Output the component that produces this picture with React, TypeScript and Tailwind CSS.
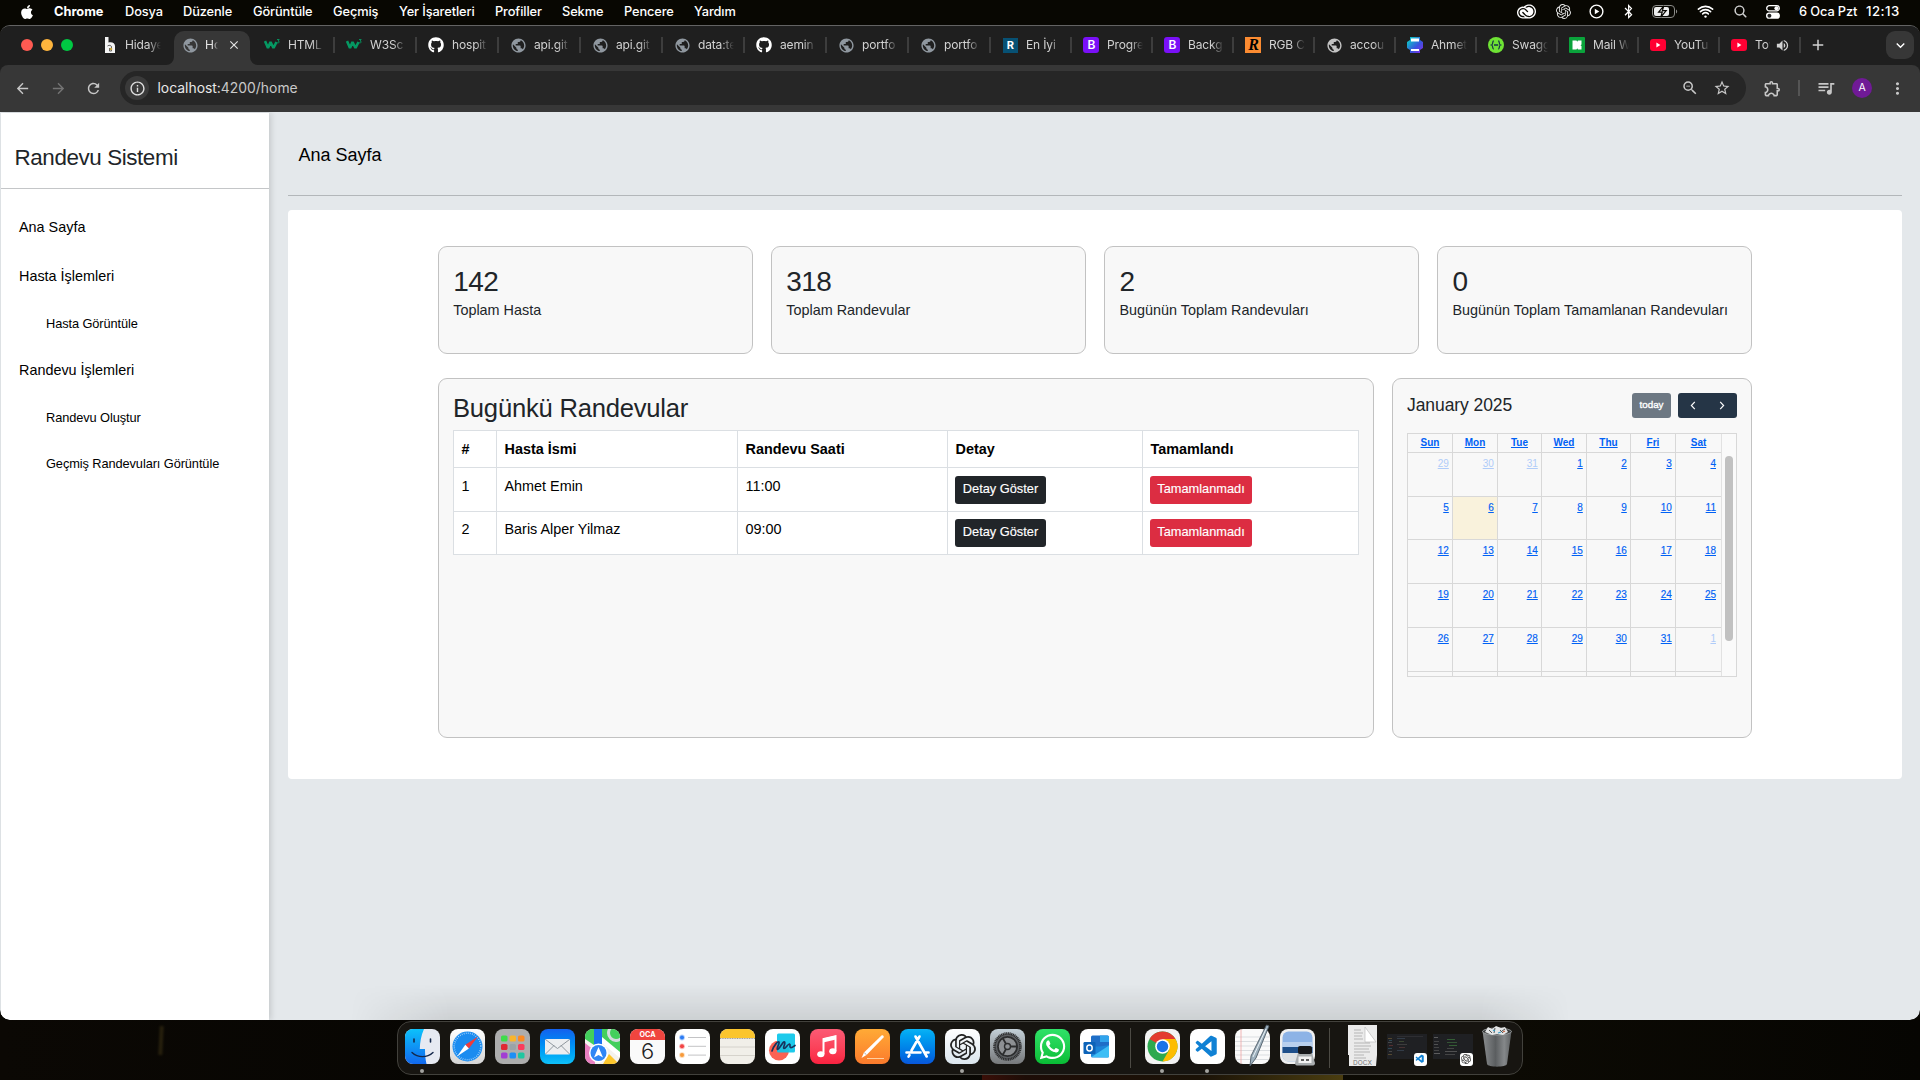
import React from "react";
import {
  MdPublic, MdArrowBack, MdArrowForward, MdRefresh, MdInfoOutline, MdZoomOut, MdStarBorder,
  MdOutlineExtension, MdQueueMusic, MdMoreVert, MdVolumeUp, MdExpandMore, MdAdd, MdClose,
} from "react-icons/md";
import { FaApple, FaGithub, FaBluetoothB, FaWhatsapp } from "react-icons/fa";
import { IoSearch, IoWifi } from "react-icons/io5";
import { SiOpenai, SiAdobecreativecloud } from "react-icons/si";
import { VscVscode } from "react-icons/vsc";

/* ---------- menu bar ---------- */

const menus = [
  { t: "Dosya", w: "w-[58px]" },
  { t: "Düzenle", w: "w-[70px]" },
  { t: "Görüntüle", w: "w-[80px]" },
  { t: "Geçmiş", w: "w-[66px]" },
  { t: "Yer İşaretleri", w: "w-[96px]" },
  { t: "Profiller", w: "w-[67px]" },
  { t: "Sekme", w: "w-[62px]" },
  { t: "Pencere", w: "w-[70px]" },
  { t: "Yardım", w: "w-[60px]" },
];

function Slot({ w, children }: { w: string; children: React.ReactNode }) {
  return <div className={"flex shrink-0 items-center justify-center " + w}>{children}</div>;
}

function MenuBar() {
  return (
    <div className="flex h-[25px] items-center bg-[#080702] pb-[2px] text-[12.8px] font-medium text-white">
      <div className="flex w-[54px] shrink-0 pl-[19px]">
        <FaApple className="h-[16px] w-[16px]" />
      </div>
      <div className="w-[71px] shrink-0 font-bold">Chrome</div>
      {menus.map((m) => (
        <div key={m.t} className={"shrink-0 whitespace-nowrap tracking-[-0.1px] " + m.w}>{m.t}</div>
      ))}
      <div className="flex-1" />
      {/* each slot is centred on its icon */}
      <Slot w="w-[36px]"><SiAdobecreativecloud className="h-[19px] w-[19px]" /></Slot>
      <Slot w="w-[38px]"><SiOpenai className="h-[15px] w-[15px] text-[#e5e5e5]" /></Slot>
      <Slot w="w-[28px]">
        <svg viewBox="0 0 16 16" className="h-[15px] w-[15px]">
          <circle cx="8" cy="8" r="6.8" fill="none" stroke="white" strokeWidth="1.5" />
          <path d="M6.2 5v6l4.8-3z" fill="white" />
        </svg>
      </Slot>
      <Slot w="w-[36px]"><FaBluetoothB className="h-[15px] w-[13px]" /></Slot>
      <Slot w="w-[38px]">
        <svg viewBox="0 0 26 13" className="h-[13px] w-[26px]">
          <rect x="0.5" y="0.5" width="22" height="12" rx="3.5" fill="none" stroke="#8b8b88" />
          <rect x="2" y="2" width="15" height="9" rx="2" fill="#eee" />
          <path d="M11.8.8 6.6 7.2h3.6l-1.4 5 5.4-6.6h-3.8z" fill="#eee" stroke="#080702" strokeWidth="1.2" />
          <path d="M24 4.5v4c1.6-.6 1.6-3.4 0-4z" fill="#8b8b88" />
        </svg>
      </Slot>
      <Slot w="w-[42px]"><IoWifi className="h-[19px] w-[19px]" /></Slot>
      <Slot w="w-[28px]"><IoSearch className="h-[15px] w-[15px] text-[#cfcfcf]" /></Slot>
      <Slot w="w-[38px]">
        <svg viewBox="0 0 14 14" className="h-[14px] w-[14px]">
          <rect x="0.7" y="0.7" width="12.6" height="5.2" rx="2.6" fill="none" stroke="white" strokeWidth="1.3" />
          <circle cx="10.4" cy="3.3" r="2" fill="white" />
          <rect x="0" y="7.6" width="14" height="6.2" rx="3.1" fill="white" />
          <circle cx="3.4" cy="10.7" r="2" fill="#222" />
        </svg>
      </Slot>
      <div className="ml-[7px] w-[67px] shrink-0 whitespace-nowrap tracking-[-0.1px]">6 Oca Pzt</div>
      <div className="w-[54px] shrink-0 text-[13.2px] tracking-[0.5px]">12:13</div>
    </div>
  );
}

/* ---------- browser tabs ---------- */

const Globe = ({ c = "text-[#8f979f]" }: { c?: string }) => <MdPublic className={"h-[17px] w-[17px] " + c} />;
const Hub = () => <FaGithub className="h-4 w-4 text-white" />;
const W3 = () => (
  <svg viewBox="0 0 16 16" className="h-4 w-4">
    <path d="M1 4 4 11l2.500-6L9.500 11l3-6" fill="none" stroke="#059862" strokeWidth="2.600" strokeLinejoin="bevel" />
    <path d="M13 2.500h2.200L14 4c1.700 0 1.700 2.300-.8 1.900" fill="none" stroke="#059862" strokeWidth=".9" />
  </svg>
);
const Boot = () => (
  <div className="flex h-4 w-4 items-center justify-center rounded-[3px] bg-[#7a10f7] text-[12px] font-semibold text-white">B</div>
);
const Tube = () => (
  <svg viewBox="0 0 16 12" className="h-[12px] w-4">
    <rect width="16" height="12" rx="3" fill="#ff0033" />
    <path d="M6.4 3.6v4.8L10.4 6z" fill="white" />
  </svg>
);

const tabs: { t: string; icon: React.ReactNode }[] = [
  { t: "HTML", icon: <W3 /> },
  { t: "W3Sc", icon: <W3 /> },
  { t: "hospit", icon: <Hub /> },
  { t: "api.git", icon: <Globe /> },
  { t: "api.git", icon: <Globe /> },
  { t: "data:te", icon: <Globe /> },
  { t: "aemin", icon: <Hub /> },
  { t: "portfo", icon: <Globe /> },
  { t: "portfo", icon: <Globe /> },
  { t: "En İyi", icon: <div className="flex h-[15px] w-[15px] items-center justify-center bg-[#075174] text-[11px] font-bold text-white">R</div> },
  { t: "Progre", icon: <Boot /> },
  { t: "Backg", icon: <Boot /> },
  { t: "RGB C", icon: <div className="flex h-4 w-4 items-center justify-center bg-[#fb8b31] font-['Liberation_Serif',serif] text-[16px] font-bold italic text-black">R</div> },
  { t: "accou", icon: <Globe c="text-[#c3c3c3]" /> },
  { t: "Ahmet", icon: (
    <svg viewBox="0 0 16 16" className="h-4 w-4">
      <defs><linearGradient id="ae" x1="0" y1="0" x2="1" y2="1"><stop offset="0.2" stopColor="#12b5c9" /><stop offset="0.6" stopColor="#3b52e0" /><stop offset="1" stopColor="#8b2be8" /></linearGradient></defs>
      <path d="M3 0h10v3l3 2v6l-3 2v3H3v-3l-3-2V5l3-2z" fill="url(#ae)" />
      <path d="M4 1.5h8v3H4zM4 12h8v2H4z" fill="white" />
    </svg>
  ) },
  { t: "Swagg", icon: (
    <svg viewBox="0 0 16 16" className="h-4 w-4">
      <circle cx="8" cy="8" r="8" fill="#6fe334" />
      <path d="M5.8 4C4 4 5.4 7.4 3.6 8c1.8.6.4 4 2.2 4M10.2 4c1.8 0 .4 3.400 2.200 4-1.800.6-.4 4-2.200 4M6 8h4.200" fill="none" stroke="#173647" strokeWidth="1.300" />
    </svg>
  ) },
  { t: "Mail W", icon: (
    <svg viewBox="0 0 16 16" className="h-4 w-4">
      <rect width="16" height="16" rx="1" fill="#0aa33b" />
      <path d="M3.500 3.500h4l.7 1.200.8-1.200h3.500v4l-1 .7 1 .8v3.500H9l-.8-1.200-.7 1.200h-4z" fill="white" />
    </svg>
  ) },
  { t: "YouTu", icon: <Tube /> },
];

const fade = "[mask-image:linear-gradient(to_right,black_65%,transparent)]";

function TabCell({ icon, t, sep = true, w = "w-[81px]" }: { icon: React.ReactNode; t: string; sep?: boolean; w?: string }) {
  return (
    <div className={"flex h-4 shrink-0 items-center pl-[10.500px] " + w}>
      <div className="flex w-[17px] shrink-0 items-center justify-center">{icon}</div>
      <div className={"ml-[7px] w-[36px] overflow-hidden whitespace-nowrap tracking-[-0.15px] " + fade}>{t}</div>
      <div className="flex-1" />
      {sep && <div className="h-4 w-[2px] bg-[#3d3d3d]" />}
    </div>
  );
}

function TabStrip() {
  return (
    <div className="flex h-[39px] items-center bg-[#1f1f1f] pb-px text-[12px] text-[#d2d2d2]">
      <div className="flex w-[90.6px] shrink-0 gap-2 pl-[21px]">
        <div className="h-3 w-3 rounded-full bg-[#ff5a52]" />
        <div className="h-3 w-3 rounded-full bg-[#ffb53d]" />
        <div className="h-3 w-3 rounded-full bg-[#00c943]" />
      </div>
      <TabCell
        sep={false}
        t="Hidaye"
        icon={
          <svg viewBox="0 0 12 16" className="h-4 w-3">
            <path d="M1 0h3.500v5.500C8 4.500 11 6 11 9v7H1z" fill="#f4f4f4" />
            <path d="M3.500 9c2-1.500 4-.5 4 1v4h-2v-3" fill="none" stroke="#555" strokeWidth=".9" />
            <circle cx="7" cy="12" r="1.300" fill="#c9a640" />
          </svg>
        }
      />
      <div className="relative mr-[3px] ml-[2.400px] -mb-px flex h-[34px] w-[76.500px] shrink-0 items-center self-end rounded-t-[10px] bg-[#373737] pb-[6px] pl-[8px] text-[#e3e3e3]">
        <svg viewBox="0 0 8 8" className="absolute bottom-0 left-[-8px] h-2 w-2"><path d="M8 0v8H0a8 8 0 0 0 8-8" fill="#373737" /></svg>
        <svg viewBox="0 0 8 8" className="absolute right-[-8px] bottom-0 h-2 w-2"><path d="M0 0v8h8a8 8 0 0 1-8-8" fill="#373737" /></svg>
        <Globe />
        <div className={"ml-[6px] w-[13px] overflow-hidden whitespace-nowrap " + fade}>Ho</div>
        <MdClose className="ml-[9px] h-[14px] w-[14px]" />
      </div>
      {tabs.map((x, i) => <TabCell key={i} icon={x.icon} t={x.t} w={i < 9 ? "w-[82px]" : "w-[81px]"} />)}
      <div className="flex h-4 w-[81px] shrink-0 items-center pl-[10.500px]">
        <div className="flex w-[17px] items-center justify-center"><Tube /></div>
        <div className="ml-[7px] w-[15px] overflow-hidden whitespace-nowrap [mask-image:linear-gradient(to_right,black_80%,transparent)]">Toy</div>
        <MdVolumeUp className="ml-[5px] h-[15px] w-[15px]" />
        <div className="flex-1" />
        <div className="h-4 w-[2px] bg-[#3d3d3d]" />
      </div>
      <MdAdd className="ml-[8px] h-[18px] w-[18px] shrink-0" />
      <div className="flex-1" />
      <div className="mr-[6px] flex h-7 w-7 items-center justify-center rounded-[9px] bg-[#373737] text-white">
        <MdExpandMore className="h-[17px] w-[17px]" />
      </div>
    </div>
  );
}

function Toolbar() {
  return (
    <div className="bg-[#1f1f1f]">
      <div className="flex h-[47px] items-center rounded-t-[8px] bg-[#373737] pb-px text-[#c7c7c7]">
        <Slot w="w-[44px]"><MdArrowBack className="h-[17px] w-[17px]" /></Slot>
        <Slot w="w-[28px]"><MdArrowForward className="h-[17px] w-[17px] text-[#747474]" /></Slot>
        <Slot w="w-[43px]"><MdRefresh className="h-[17px] w-[17px]" /></Slot>
        <div className="ml-[5px] flex h-[34px] w-[1626px] shrink-0 items-center rounded-full bg-[#262626]">
          <div className="ml-[5px] flex h-6 w-6 items-center justify-center rounded-full bg-[#3a3a3a]">
            <MdInfoOutline className="h-[17px] w-[17px] text-[#dedede]" />
          </div>
          <div className="ml-[8.500px] text-[13.900px] text-[#c9c9c9]">
            <span className="text-[#e8e8e8]">localhost:</span>4200/home
          </div>
          <div className="flex-1" />
          <MdZoomOut className="h-[18px] w-[18px]" />
          <MdStarBorder className="mr-[15px] ml-[14px] h-[18px] w-[18px]" />
        </div>
        <MdOutlineExtension className="ml-[17px] h-[19px] w-[19px]" />
        <div className="ml-[16px] h-4 w-[2px] bg-[#555]" />
        <MdQueueMusic className="ml-[16px] h-[20px] w-[20px]" />
        <div className="ml-[16px] flex h-5 w-5 items-center justify-center rounded-full bg-[#701a96] text-[10.500px] text-white">A</div>
        <MdMoreVert className="ml-[16px] h-[19px] w-[19px]" />
      </div>
    </div>
  );
}

/* ---------- web page ---------- */

const nav = [
  { t: "Ana Sayfa", c: "h-[49px] pl-[18px] text-[14.4px]" },
  { t: "Hasta İşlemleri", c: "h-[49px] pl-[18px] text-[14.4px]" },
  { t: "Hasta Görüntüle", c: "h-[46px] pl-[45px] text-[12.8px] tracking-[-0.090px]" },
  { t: "Randevu İşlemleri", c: "h-[47px] pl-[18px] text-[14.4px]" },
  { t: "Randevu Oluştur", c: "h-[47px] pl-[45px] text-[12.8px] tracking-[-0.090px]" },
  { t: "Geçmiş Randevuları Görüntüle", c: "h-[46px] pl-[45px] text-[12.8px] tracking-[-0.090px]" },
];

function Sidebar() {
  return (
    <aside className="z-10 mt-px ml-px w-[268px] shrink-0 bg-white shadow-[2px_0_6px_rgba(0,0,0,0.14)]">
      <h3 className="h-[76px] border-b border-[#c4c6c8] pt-[30px] pl-[13.500px] text-[22.400px] leading-[30px] tracking-[-0.400px] text-[#212529]">
        Randevu Sistemi
      </h3>
      <nav className="flex flex-col pt-[14px] text-black">
        {nav.map((n) => (
          <a key={n.t} className={"flex items-center whitespace-nowrap " + n.c}>{n.t}</a>
        ))}
      </nav>
    </aside>
  );
}

const stats = [
  ["142", "Toplam Hasta"],
  ["318", "Toplam Randevular"],
  ["2", "Bugünün Toplam Randevuları"],
  ["0", "Bugünün Toplam Tamamlanan Randevuları"],
];

const appts = [
  ["1", "Ahmet Emin", "11:00"],
  ["2", "Baris Alper Yilmaz", "09:00"],
];

const card = "rounded-[9px] border border-[#c2c2c2] bg-[#f8f8f8]";
const cols = "grid grid-cols-[43px_241px_210px_195px_216px]";
const cell = "border-r border-b border-[#dbdfe3] ";
const btn = "block h-7 rounded-[3px] pb-[3px] text-[12.8px] leading-[24px] text-white [-webkit-text-stroke:0.150px_white] ";

function Appointments() {
  return (
    <section className={card + " w-[936px] shrink-0 pl-[14px]"}>
      <h2 className="pt-[13px] text-[25.6px] leading-[32px] tracking-[-0.220px] text-[#212529]">Bugünkü Randevular</h2>
      <div className="mt-[6px] w-[906px] border-t border-l border-[#dbdfe3] bg-white text-[14.4px] text-black">
        <div className={cols + " font-bold"}>
          {["#", "Hasta İsmi", "Randevu Saati", "Detay", "Tamamlandı"].map((h) => (
            <div key={h} className={cell + "h-[37px] pl-[7.500px] leading-[36px]"}>{h}</div>
          ))}
        </div>
        {appts.map((r, i) => (
          <div key={r[0]} className={cols + (i === 0 ? " h-[44px]" : " h-[43px]")}>
            {r.map((c) => <div key={c} className={cell + "pl-[7.500px] leading-[21px]" + (i === 0 ? " pt-[8px]" : " pt-[7px]")}>{c}</div>)}
            <div className={cell + "pl-[7px]" + (i === 0 ? " pt-[8px]" : " pt-[7px]")}>
              <button className={btn + "w-[91px] bg-[#212529]"}>Detay Göster</button>
            </div>
            <div className={cell + "pl-[7px]" + (i === 0 ? " pt-[8px]" : " pt-[7px]")}>
              <button className={btn + "w-[102px] bg-[#dc2d42]"}>Tamamlanmadı</button>
            </div>
          </div>
        ))}
      </div>
    </section>
  );
}

const weeks = [
  { h: "h-[44px]", d: [29, 30, 31, 1, 2, 3, 4] },
  { h: "h-[43px]", d: [5, 6, 7, 8, 9, 10, 11] },
  { h: "h-[44px]", d: [12, 13, 14, 15, 16, 17, 18] },
  { h: "h-[44px]", d: [19, 20, 21, 22, 23, 24, 25] },
  { h: "h-[44px]", d: [26, 27, 28, 29, 30, 31, 1] },
];
const calCols = "grid grid-cols-[45px_45px_44px_45px_44px_45px_45px]";

function Calendar() {
  return (
    <section className={card + " w-[360px] shrink-0 pl-[14px] text-[#0061f5]"}>
      <div className="flex h-[54px] pt-[14px] pr-[14px] text-[#212529]">
        <h2 className="flex-1 text-[17.5px] leading-[24px] tracking-[-0.080px]">January 2025</h2>
        <button className="h-[25px] w-[39px] rounded-[3px] bg-[#6d7883] pb-[2px] text-[9.8px] leading-[23px] text-white [-webkit-text-stroke:0.350px_white]">today</button>
        <div className="ml-[7px] flex h-[25px] w-[59px] items-center justify-between rounded-[3px] bg-[#253546] px-[12px]">
          {["M5 1 1.200 5 5 9", "M1 1l3.800 4L1 9"].map((d) => (
            <svg key={d} viewBox="0 0 6 10" className="h-[9px] w-[6px]"><path d={d} fill="none" stroke="white" strokeWidth="1.300" /></svg>
          ))}
        </div>
      </div>
      <div className="flex h-[244px] w-[330px] overflow-hidden border border-[#d8d8d8] text-[10px] leading-[11px]">
        <div className="w-[313px] shrink-0">
          <div className={calCols}>
            {["Sun", "Mon", "Tue", "Wed", "Thu", "Fri", "Sat"].map((d) => (
              <div key={d} className="h-[19px] border-r border-b border-[#d8d8d8] pt-[3px] text-center font-bold underline underline-offset-1 last:border-r-0">{d}</div>
            ))}
          </div>
          {weeks.map((w, i) => (
            <div key={i} className={calCols + " " + w.h}>
              {w.d.map((d, j) => {
                const dim = (i === 0 && d > 20) || (i === 4 && d === 1);
                return (
                  <div
                    key={j}
                    className={
                      "border-r border-b border-[#d8d8d8] pt-[5px] pr-[3.200px] text-right underline underline-offset-1 last:border-r-0 last:pr-[5px]" +
                      (dim ? " text-[#b0ccf9]" : " [-webkit-text-stroke:0.150px_#0061f5]") +
                      (d === 6 ? " bg-[#f9f2dc]" : "")
                    }
                  >
                    {d}
                  </div>
                );
              })}
            </div>
          ))}
          <div className={calCols + " h-[5px]"}>
            {[0, 1, 2, 3, 4, 5, 6].map((k) => <div key={k} className="border-r border-[#d8d8d8] last:border-r-0" />)}
          </div>
        </div>
        <div className="w-[15px] border-l border-[#e2e2e2] bg-[#fafafa] pt-[22px] pl-[3px]">
          <div className="h-[185px] w-2 rounded-full bg-[#c1c1c1]" />
        </div>
      </div>
    </section>
  );
}

function Page() {
  return (
    <div className="flex h-[908px] overflow-hidden rounded-b-[10px] bg-[#e4e8eb] font-['Liberation_Sans',Arial,sans-serif]">
      <Sidebar />
      <main className="flex-1 pr-[18px] pl-[19px]">
        <header className="h-[84px] border-b border-[#b3b7ba] pt-[29px] pl-[10.500px] text-[18px] leading-[28px] text-black">Ana Sayfa</header>
        <div className="mt-[14px] h-[569px] rounded-[4px] bg-white pt-[36px]">
          <div className="mx-auto flex w-[1314px] flex-col gap-[24px]">
            <div className="grid grid-cols-4 gap-[18.4px]">
              {stats.map(([n, l]) => (
                <div key={l} className={card + " h-[108px] pt-[17px] pl-[14.200px] text-[#212529]"}>
                  <div className="text-[28px] leading-[36px] tracking-[-0.600px]">{n}</div>
                  <div className="text-[14.4px] leading-[20px] whitespace-nowrap">{l}</div>
                </div>
              ))}
            </div>
            <div className="flex h-[360px] gap-[18px]">
              <Appointments />
              <Calendar />
            </div>
          </div>
        </div>
      </main>
    </div>
  );
}

/* ---------- dock ---------- */

function DockIcon({ bg, dot, children }: { bg: string; dot?: boolean; children?: React.ReactNode }) {
  return (
    <div className="relative h-[35px] w-[35px] shrink-0">
      <div className={"flex h-[35px] w-[35px] items-center justify-center overflow-hidden rounded-[8px] " + bg}>{children}</div>
      {dot && <div className="absolute top-[40px] left-[15px] h-1 w-1 rounded-full bg-[#a3a3a0]" />}
    </div>
  );
}

const Art = ({ children }: { children: React.ReactNode }) => (
  <svg viewBox="0 0 35 35" className="h-[35px] w-[35px]">{children}</svg>
);

const pads = ["#3fdc4a", "#f9b52c", "#fb8a24", "#e02833", "#9aa3a8", "#fb3b5c", "#a23fd3", "#1f8ff5", "#1fc7a0"];

function Thumb({ children, code }: { children: React.ReactNode; code: [number, number, number, string][] }) {
  return (
    <div className="relative flex h-[35px] w-[40px] shrink-0 items-start pt-[4px]">
      <svg viewBox="0 0 40 26" className="h-[26px] w-[40px]">
        <rect width="40" height="25" y="1" fill="#1f2023" />
        {code.map(([x, y, w, c], i) => <rect key={i} x={x} y={y} width={w} height="0.7" fill={c} />)}
      </svg>
      <div className="absolute top-[23.500px] left-[27px] flex h-[13px] w-[13px] items-center justify-center rounded-[3px] bg-white">{children}</div>
    </div>
  );
}

const codeA: [number, number, number, string][] = [
  [1, 5, 4, "#6b5a35"], [2, 7, 3, "#355a6b"], [1, 9, 4, "#5a5a5a"], [2, 12, 4, "#6b3535"], [1, 15, 4, "#355a6b"], [2, 18, 3, "#5a5a5a"], [1, 21, 4, "#6b5a35"],
  [10, 5, 8, "#3c4a5a"], [12, 8, 5, "#4a5a3c"], [10, 11, 10, "#4a4a4a"], [12, 14, 6, "#5a3c3c"], [10, 17, 7, "#3c4a5a"], [10, 3, 26, "#35363a"],
];
const codeB: [number, number, number, string][] = [
  [1, 4, 4, "#777"], [1, 8, 5, "#555"], [1, 11, 4, "#666"], [1, 14, 5, "#555"], [1, 17, 5, "#555"], [1, 20, 6, "#777"],
  [14, 6, 8, "#3e7a3e"], [14, 9, 10, "#3e6a3e"], [16, 12, 8, "#3e7a3e"], [14, 15, 7, "#555"], [12, 18, 12, "#666"], [12, 21, 10, "#555"],
];

function Dock() {
  return (
    <div className="relative mx-auto mt-[1px] flex h-[54px] w-[1126px] gap-[10px] rounded-[14px] border border-[#42413c] bg-[#171511] pt-[7px] pl-[7px]">
      <DockIcon bg="bg-[#e6eaf2]" dot>
        <Art>
          <defs><linearGradient id="fi" x1="0" y1="0" x2="0" y2="1"><stop stopColor="#0cc1fb" /><stop offset="1" stopColor="#1168ee" /></linearGradient></defs>
          <path d="M0 0h19c-3 7-4 13-4.200 20H20c0 6 .5 11 1.500 15H0z" fill="url(#fi)" />
          <path d="M9 10v3M25.500 10v3" stroke="#14284b" strokeWidth="1.600" strokeLinecap="round" />
          <path d="M7 23.500c6 5.500 15 5.500 21 0" fill="none" stroke="#14284b" strokeWidth="1.400" strokeLinecap="round" />
        </Art>
      </DockIcon>
      <DockIcon bg="bg-linear-to-b from-white to-[#d5d5d5]">
        <Art>
          <circle cx="17.500" cy="17.500" r="15" fill="#1b8cf0" />
          <circle cx="17.500" cy="17.500" r="13.300" fill="none" stroke="#d5ebff" strokeWidth="1.600" strokeDasharray=".6 1.490" />
          <path d="m28 7.500-12.700 8.300 3.600 3.600z" fill="#f23a3a" />
          <path d="m7 27.500 8.300-11.700 3.600 3.600z" fill="#fff" />
        </Art>
      </DockIcon>
      <DockIcon bg="bg-[#adadad]">
        <Art>{pads.map((c, i) => <rect key={c} x={6 + (i % 3) * 8.5} y={6.5 + Math.floor(i / 3) * 8.5} width="6.500" height="6" rx="1.600" fill={c} />)}</Art>
      </DockIcon>
      <DockIcon bg="bg-linear-to-b from-[#1460ee] to-[#10c0f8]">
        <Art>
          <rect x="5" y="10" width="25" height="15.500" rx="1.500" fill="#eceef0" />
          <path d="m5.500 10.500 12 9 12-9M5.500 25l8.500-8.500M29.500 25 21 16.500" fill="none" stroke="#8f979e" strokeWidth="1" />
        </Art>
      </DockIcon>
      <DockIcon bg="bg-[#f4f2ee]">
        <Art>
          <path d="M16 0h19v24L16 9z" fill="#43cf5c" />
          <path d="M0 0h9v16L0 10z" fill="#43cf5c" />
          <path d="M9 0h8v18H9z" fill="#1a70f0" />
          <path d="M0 14l10 8v13H0z" fill="#e97fc0" />
          <path d="M18 35l6-10 10 10z" fill="#fcc62d" />
          <path d="M17 8 35 23v6L17 14z" fill="#fff" />
          <circle cx="31" cy="4" r="7.500" fill="none" stroke="#d4dade" strokeWidth="3" />
          <circle cx="13.500" cy="24" r="9.500" fill="#fff" />
          <circle cx="13.500" cy="24" r="8" fill="#2f86f5" />
          <path d="m13.500 18 4.500 10.500-4.500-2.500L9 28.500z" fill="#fff" />
        </Art>
      </DockIcon>
      <DockIcon bg="bg-[#fafafa]">
        <div className="flex h-full w-full flex-col">
          <div className="h-[11px] bg-[#f0453f] text-center text-[7.200px] font-bold leading-[12px] text-white">OCA</div>
          <div className="text-center text-[22px] font-light leading-[23px] text-[#222]">6</div>
        </div>
      </DockIcon>
      <DockIcon bg="bg-white">
        <Art>
          {["#2b7bf3", "#f24545", "#f79a3a"].map((c, i) => (
            <g key={c}>
              <circle cx="7" cy={8.5 + i * 8.8} r="2.900" fill={c} opacity=".35" />
              <circle cx="7" cy={8.5 + i * 8.8} r="2" fill={c} />
              <path d={`M13 ${8.5 + i * 8.8}h18`} stroke="#c3c3c5" strokeWidth="1" />
            </g>
          ))}
        </Art>
      </DockIcon>
      <DockIcon bg="bg-[#f1efe9]">
        <Art>
          <rect width="35" height="9" fill="#fbc52d" />
          <path d="M0 9.500h35" stroke="#9c9a93" strokeWidth="1" strokeDasharray="1 .7" />
          <path d="M0 18h35M0 26.500h35" stroke="#cfccc4" strokeWidth=".8" />
        </Art>
      </DockIcon>
      <DockIcon bg="bg-white">
        <Art>
          <circle cx="14" cy="21.500" r="10" fill="#fb6252" />
          <rect x="12" y="4.500" width="18" height="19" rx="1.500" fill="#0cc6ea" opacity=".93" />
          <path d="M7 22c2-6 6-10 7-9s-3 7-1.500 7.500S18 12 19.500 13s-2 6-.5 6.500 4-5 5.500-4.500-.5 3 1 3.500 3-1 4.500-2" fill="none" stroke="#17325c" strokeWidth="1.700" strokeLinecap="round" />
        </Art>
      </DockIcon>
      <DockIcon bg="bg-linear-to-b from-[#fb5a74] to-[#fa2140]">
        <Art>
          <path d="M13.500 25V10l12-2.800V22" fill="none" stroke="#fff" strokeWidth="2" />
          <path d="M13 9.500l13-3v4l-13 3z" fill="#fff" />
          <ellipse cx="10.800" cy="25.300" rx="3.600" ry="3" fill="#fff" />
          <ellipse cx="22.800" cy="22.300" rx="3.600" ry="3" fill="#fff" />
        </Art>
      </DockIcon>
      <DockIcon bg="bg-linear-to-b from-[#ffaa36] to-[#fb7a2c]">
        <Art>
          <path d="M6.500 29 9 23.500 26.500 6.500c1.300-1 2.900.6 2 1.900L11.500 26z" fill="#fff" />
          <path d="m9.300 23.500 2 2.300" stroke="#999" strokeWidth=".8" />
          <path d="M12 29.500h17" stroke="#ffd9ae" strokeWidth=".9" />
        </Art>
      </DockIcon>
      <DockIcon bg="bg-linear-to-b from-[#0bb2f5] to-[#0a57dc] text-white">
        <Art>
          <path d="M19.500 7.500 11.500 21.500M15.500 7.500l11.200 20M6.500 23.500h14M25 23.500h3.500M9.500 26l-1 1.700" stroke="white" strokeWidth="2.600" strokeLinecap="round" fill="none" />
        </Art>
      </DockIcon>
      <DockIcon bg="bg-linear-to-b from-white to-[#dbe6ee] text-[#222]" dot><SiOpenai className="h-[26px] w-[26px]" /></DockIcon>
      <DockIcon bg="bg-linear-to-b from-[#c3d0d8] to-[#77797b]">
        <Art>
          <circle cx="17.500" cy="17.500" r="13" fill="#5c5f62" stroke="#2c2d2e" strokeWidth="2.600" strokeDasharray="1.100 .6" />
          <circle cx="17.500" cy="17.500" r="9.600" fill="#8d9093" stroke="#2c2d2e" strokeWidth="1.800" />
          <path d="M17.500 17.500h10M17.500 17.500l-5-8.700M17.500 17.500l-5 8.700" stroke="#2c2d2e" strokeWidth="1.800" />
          <circle cx="17.500" cy="17.500" r="3" fill="#8d9093" stroke="#2c2d2e" strokeWidth="1.400" />
        </Art>
      </DockIcon>
      <DockIcon bg="bg-linear-to-b from-[#2fe268] to-[#08bd35] text-white"><FaWhatsapp className="h-[29px] w-[29px]" /></DockIcon>
      <DockIcon bg="bg-white">
        <Art>
          <rect x="11" y="6.500" width="18" height="13" rx="1.500" fill="#1e6ec7" />
          <path d="M20 6.500h7.500a1.500 1.500 0 0 1 1.500 1.500v5h-9z" fill="#30a4ec" />
          <path d="M11 17.500h9l9-1.500v11a1.500 1.500 0 0 1-1.500 1.500h-15A1.500 1.500 0 0 1 11 27z" fill="#1c85d8" />
          <path d="m11.500 28 17.500-11.500V27a1.500 1.500 0 0 1-1.500 1.500z" fill="#3dbef5" />
          <rect x="3.500" y="13" width="12" height="12" rx="1.200" fill="#0c63b8" />
          <ellipse cx="9.500" cy="19" rx="2.700" ry="3" fill="none" stroke="#fff" strokeWidth="1.500" />
        </Art>
      </DockIcon>
      <div className="mt-[-1px] ml-[4.500px] h-10 w-px shrink-0 bg-[#4c4a44]" />
      <div className="ml-[4px] flex gap-[10px]">
        <DockIcon bg="bg-[#f3f3f3]" dot>
          <Art>
            <circle cx="17.500" cy="17.500" r="15" fill="#2da94f" />
            <path d="M17.500 17.500 4.510 10a15 15 0 0 1 25.980 0z" fill="#e33b2e" />
            <path d="M17.500 10h13a15 15 0 0 1-13 22.500l6.500-11.300z" fill="#fdbd00" />
            <circle cx="17.500" cy="17.500" r="7.300" fill="#fff" />
            <circle cx="17.500" cy="17.500" r="5.700" fill="#1a73e8" />
          </Art>
        </DockIcon>
        <DockIcon bg="bg-white text-[#1081d4]" dot><VscVscode className="h-[26px] w-[26px]" /></DockIcon>
        <div className="relative">
          <DockIcon bg="bg-[#fafafa]">
            <Art>
              <path d="M0 8h35M0 12.500h35M0 17h35M0 21.500h35M0 26h35M0 30.500h35" stroke="#cdd1d6" strokeWidth=".7" />
              <path d="M6 0v35" stroke="#efa3a3" strokeWidth=".8" />
            </Art>
          </DockIcon>
          <svg viewBox="0 0 22 46" className="absolute top-[-5px] left-[13px] h-[46px] w-[22px]">
            <path d="M18.500 1 21 2 8 34l-6 8 1-10z" fill="#9db0bd" stroke="#4e5b66" strokeWidth=".9" />
            <path d="m18 5-13 28" stroke="#e9f1f5" strokeWidth="1" />
          </svg>
        </div>
        <div className="relative">
          <DockIcon bg="bg-[#f0f0f0]">
            <Art>
              <rect x="2.500" y="2.500" width="30" height="30" rx="6" fill="#8db3e6" />
              <path d="M2.500 13h30v6h-30z" fill="#b9d0ee" />
              <rect x="2.500" y="18" width="30" height="6" fill="#1e4f8a" />
              <path d="M2.500 24h30v3a6 6 0 0 1-6 5.500h-18a6 6 0 0 1-6-5.500z" fill="#dfe2e4" />
            </Art>
          </DockIcon>
          <svg viewBox="0 0 20 22" className="absolute top-[16px] left-[15px] h-[22px] w-[20px]">
            <path d="M3 8h14l3 10c0 2-1 2.500-3 2.500H3c-2 0-3-.5-3-2.500z" fill="#a9adaf" />
            <rect x="3" y="1" width="14" height="8" rx="2" fill="#17181a" />
            <path d="M3.500 11.500h13v6.500h-13z" fill="#f2f2f2" />
            <path d="M6 15h3M11 15h3" stroke="#333" strokeWidth="1.500" />
          </svg>
        </div>
      </div>
      <div className="mt-[-1px] ml-[4.500px] h-10 w-px shrink-0 bg-[#4c4a44]" />
      <div className="mt-[-4px] ml-[7.500px] h-[42px] w-[29px] shrink-0">
        <svg viewBox="0 0 29 42" className="h-[42px] w-[29px]">
          <path d="M0 0h29v30l-1 11H1V30H0z" fill="#ebebeb" />
          <path d="M17 2v15h11z" fill="#fff" stroke="#bbb" strokeWidth=".7" />
          <path d="M6 5h7M6 8h9M6 11h8M6 14h9M6 18h16M6 21h17M6 24h15M6 27h16M6 30h10M6 33h12" stroke="#a7a7a7" strokeWidth=".8" />
          <text x="14.500" y="40" textAnchor="middle" fontSize="6.500" fill="#777">DOCX</text>
        </svg>
      </div>
      <Thumb code={codeA}><VscVscode className="h-[10px] w-[10px] text-[#1081d4]" /></Thumb>
      <div className="ml-[-4px]"><Thumb code={codeB}><SiOpenai className="h-[10px] w-[10px] text-[#333]" /></Thumb></div>
      <div className="mt-[-4px] ml-[-2px] h-[45px] w-[32px] shrink-0">
        <svg viewBox="0 0 32 45" className="h-[45px] w-[32px]">
          <defs><linearGradient id="tr"><stop stopColor="#8a8d8f" /><stop offset=".45" stopColor="#5b5e60" /><stop offset=".75" stopColor="#85888a" /><stop offset="1" stopColor="#5c5f61" /></linearGradient></defs>
          <path d="M1.500 6h29l-4.500 33c-.5 3.500-19.500 3.500-20 0z" fill="url(#tr)" />
          <ellipse cx="16" cy="6.500" rx="14.500" ry="3.500" fill="#3a3c3d" stroke="#a5a8aa" strokeWidth=".8" />
          <path d="M4 7 7 2l4 2 4-3 5 2 4-1 3 5-5 3-6-1-5 1z" fill="#e4e6e7" />
          <path d="m8 5 3 3M14 3l-1 5M19 5l3 3M24 4l-3 2" stroke="#555" strokeWidth="1" />
          <path d="m12 5 2 1M17 8l3-1" stroke="#39a0c9" strokeWidth="1.200" />
          <path d="m22 7 2-1" stroke="#c9603a" strokeWidth="1.200" />
        </svg>
      </div>
    </div>
  );
}

export default function App() {
  return (
    <div className="h-[1080px] w-[1920px] overflow-hidden bg-[#080702] font-['Inter',sans-serif]">
      <MenuBar />
      <div className="relative">
        <div className="overflow-hidden rounded-[10px] border-t border-[#636363] bg-[#1f1f1f]">
          <TabStrip />
          <Toolbar />
          <Page />
        </div>
        {/* shadow cast upwards by the dock */}
        <div className="pointer-events-none absolute inset-x-0 bottom-0 z-20 h-[36px] bg-linear-to-b from-black/0 to-black/10 [mask-image:linear-gradient(to_right,transparent_350px,black_450px,black_1480px,transparent_1570px)]" />
      </div>
      <div className="relative flex h-[60px] bg-[linear-gradient(to_right,#0b0804,#060502_30%,#0a0804_55%,#0d0b04_75%,#060502)]">
        {/* dim lights of the wallpaper */}
        <div className="absolute top-[6px] left-[159px] h-[29px] w-[4px] rotate-3 bg-[#3a3014] opacity-60 blur-[1px]" />
        <div className="absolute bottom-0 left-[982px] h-[5px] w-[361px] bg-[linear-gradient(to_right,#3a0f08,#1d0d07_12%,#1a1207_60%,#4a3d10)]" />
        <Dock />
      </div>
    </div>
  );
}
